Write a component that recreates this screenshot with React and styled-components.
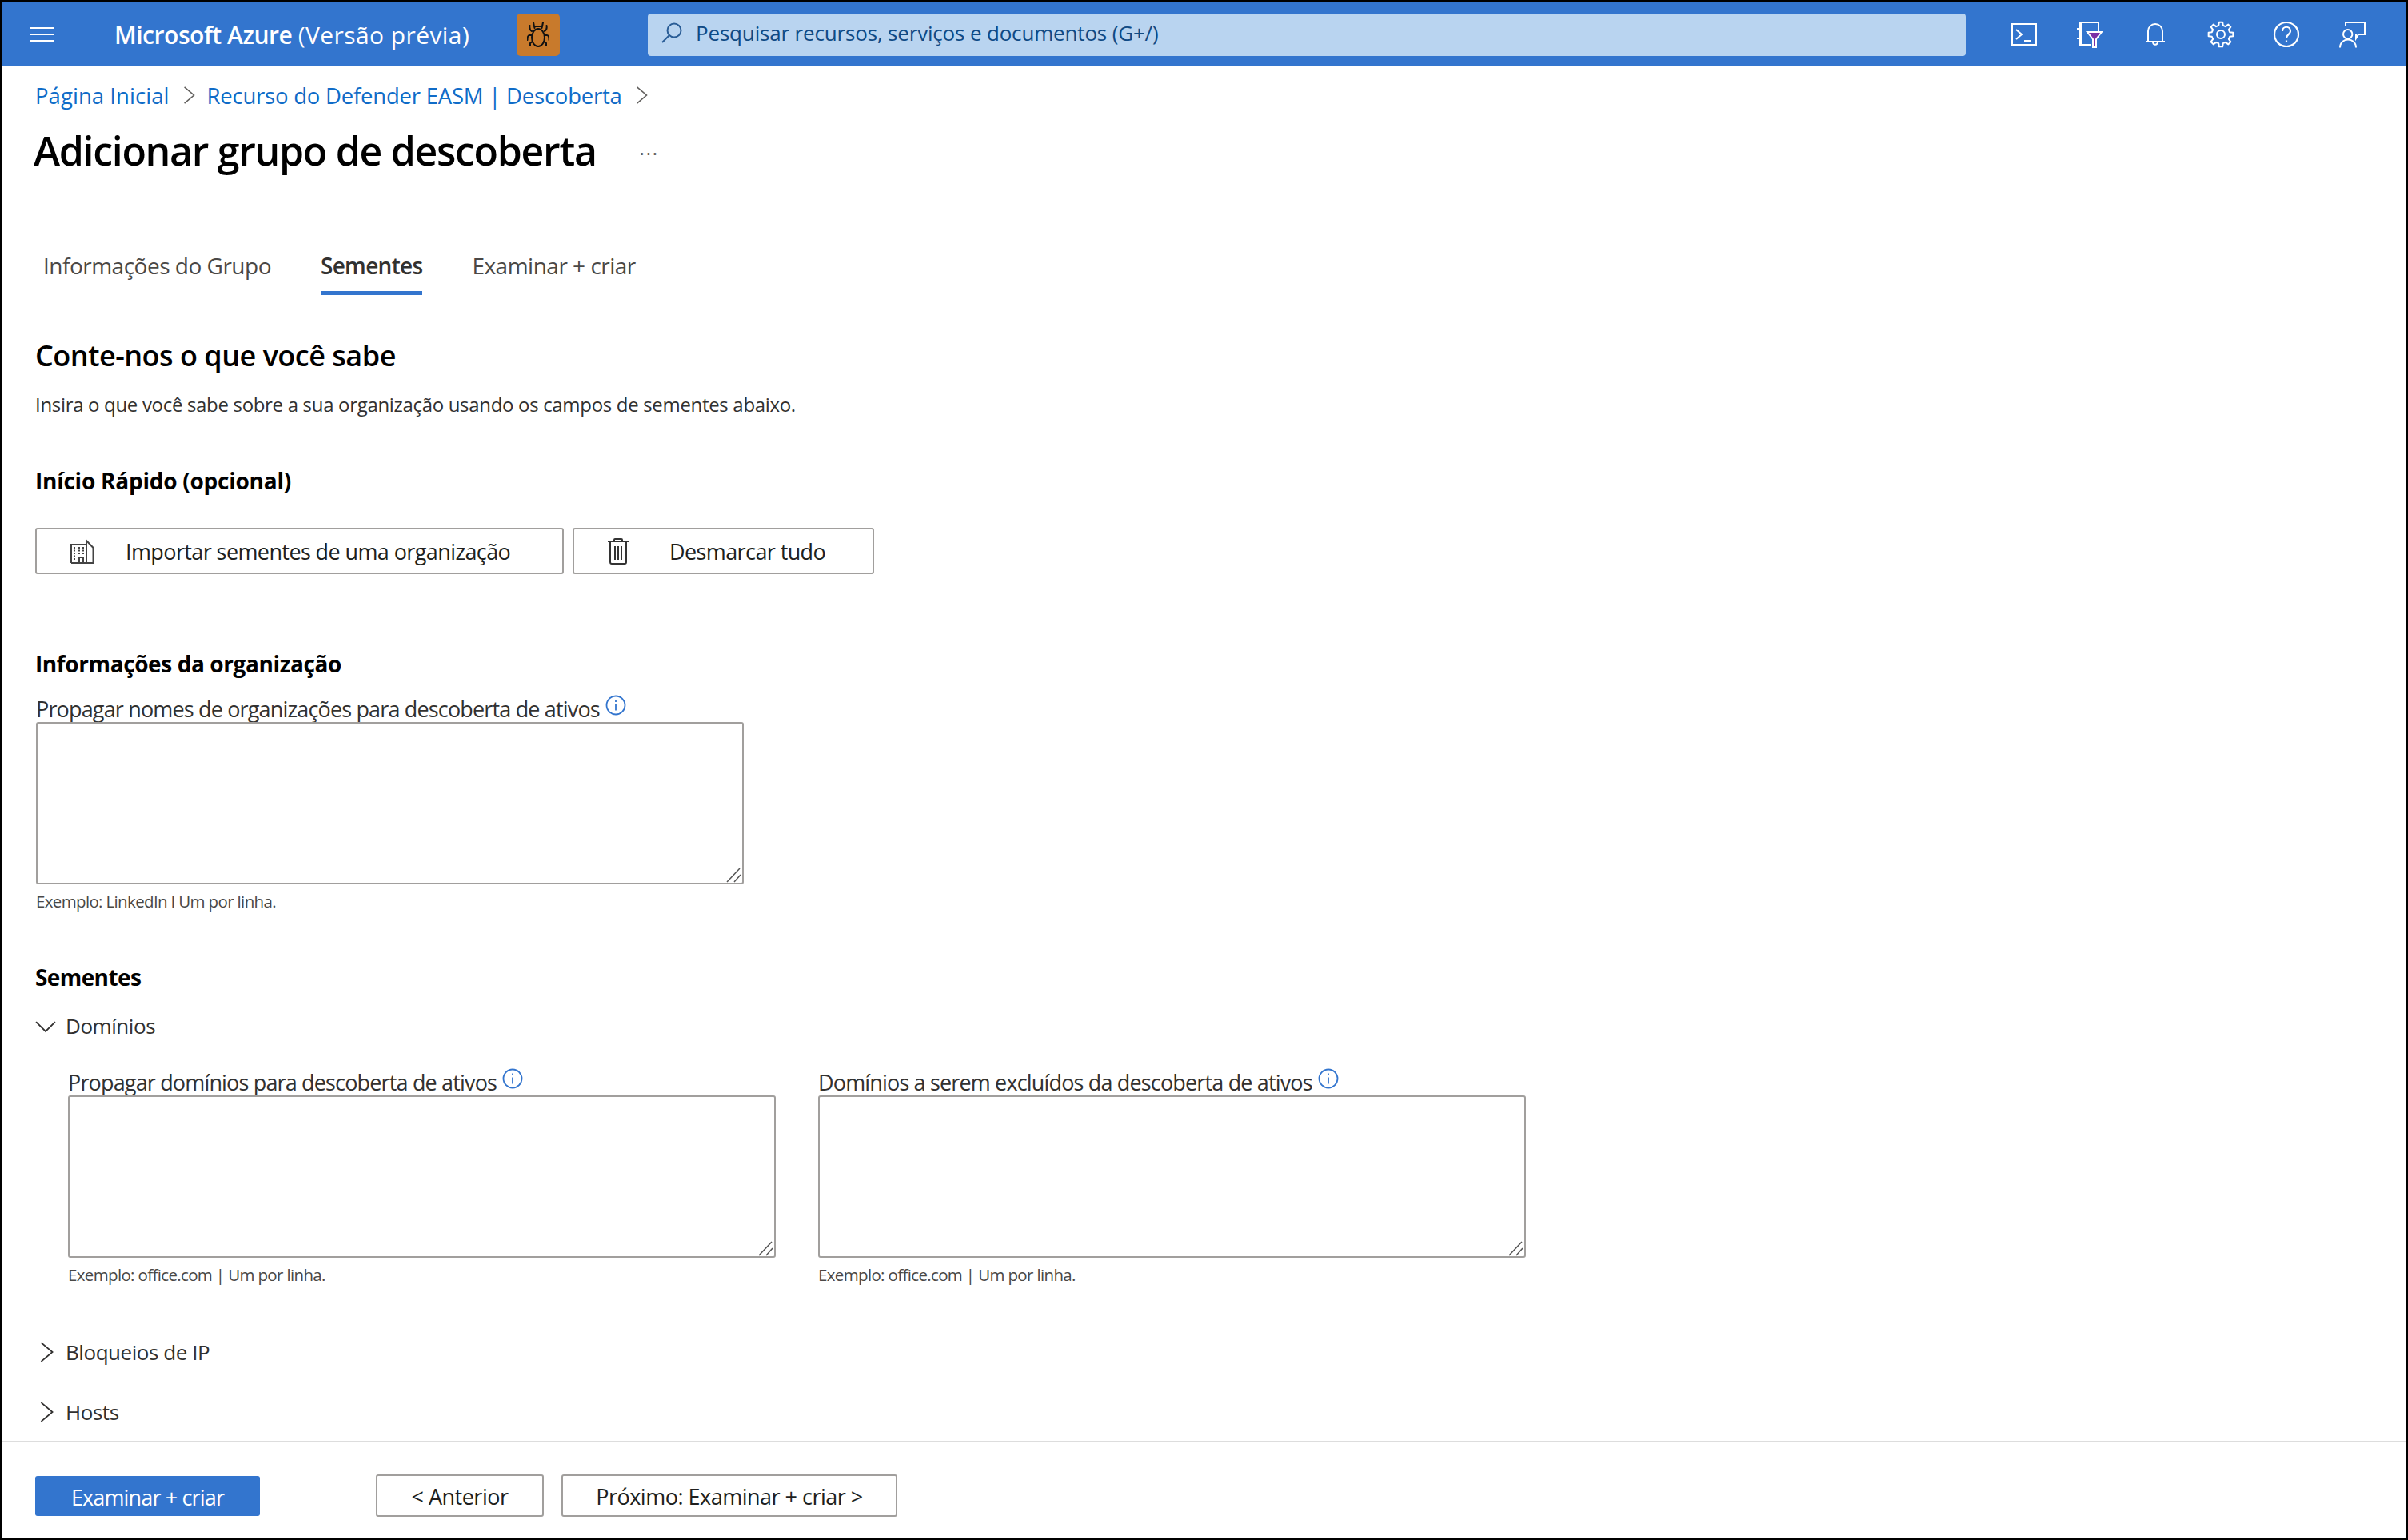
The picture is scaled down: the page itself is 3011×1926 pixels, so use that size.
import styled, { createGlobalStyle } from "styled-components";

const GlobalStyle = createGlobalStyle`
  html, body {
    margin: 0;
    background: #fff;
  }
  * {
    box-sizing: border-box;
  }
`;

const Frame = styled.div`
  border: 3px solid #000;
  color: #323130;
  display: flex;
  flex-direction: column;
  font-family: "Open Sans", "Liberation Sans", sans-serif;
  height: 1926px;
  width: 3011px;
`;

const TopBar = styled.header`
  align-items: center;
  background: #3375ce;
  color: #fff;
  display: flex;
  flex: none;
  height: 80px;
`;
const MenuButton = styled.div`
  display: flex;
  flex: none;
  margin-left: 35px;
  width: 105px;
`;
const Brand = styled.div`
  flex: none;
  font-size: 30px;
  font-weight: 600;
  letter-spacing: -0.45px;
  width: 503px;
`;
const BrandNote = styled.span`
  font-weight: 500;
  letter-spacing: 0.42px;
`;
const BugChip = styled.div`
  align-items: center;
  background: #c87a2c;
  border-radius: 5px;
  display: flex;
  flex: none;
  height: 53px;
  justify-content: center;
  width: 54px;
`;
const SearchBox = styled.div`
  align-items: center;
  background: #b9d4f0;
  border-radius: 4px;
  color: #0f4a85;
  display: flex;
  flex: none;
  font-size: 26px;
  gap: 16px;
  height: 53px;
  letter-spacing: -0.17px;
  margin-left: 110px;
  padding-left: 16px;
  padding-bottom: 5px;
  width: 1648px;
`;
const IconTray = styled.div`
  align-items: center;
  display: flex;
  flex: 1;
  justify-content: flex-start;
  padding-left: 55px;
`;
const TrayIcon = styled.div`
  align-items: center;
  display: flex;
  height: 40px;
  justify-content: center;
  margin-right: 46px;
  width: 36px;
`;

const Content = styled.main`
  display: flex;
  flex: 1;
  flex-direction: column;
  padding: 0 41px;
`;
const Breadcrumb = styled.nav`
  align-items: center;
  display: flex;
  font-size: 27.5px;
  height: 40px;
  letter-spacing: -0.22px;
  margin-top: 16px;
`;
const Crumb = styled.a`
  color: #0f6cc8;
  letter-spacing: ${(p) => p.$track ?? -0.22}px;
  margin-left: ${(p) => p.$offset || 0}px;
  text-decoration: none;
`;
const CrumbArrow = styled.span`
  display: flex;
  margin-left: ${(p) => p.$offset}px;
`;
const PageTitleRow = styled.div`
  align-items: center;
  display: flex;
  height: 60px;
  margin-left: -2px;
  margin-top: 19px;
`;
const PageTitle = styled.h1`
  color: #000;
  font-size: 50px;
  font-weight: 600;
  letter-spacing: -1.3px;
  line-height: 60px;
  margin: 0;
`;
const MoreDots = styled.span`
  color: #605e5c;
  font-size: 24px;
  letter-spacing: 1.8px;
  margin-bottom: 8px;
  margin-left: 54px;
`;
const Tabs = styled.div`
  display: flex;
  margin-left: 10px;
  margin-top: 94px;
`;
const Tab = styled.div`
  border-bottom: 5px solid ${(p) => (p.$active ? "#3375ce" : "transparent")};
  color: ${(p) => (p.$active ? "#323130" : "#4a4846")};
  font-size: 28px;
  font-weight: ${(p) => (p.$active ? 600 : 400)};
  height: 57px;
  letter-spacing: ${(p) => (p.$active ? -0.7 : -0.5)}px;
  line-height: 40px;
  margin-right: 62px;
`;
const SectionTitle = styled.h2`
  color: #000;
  font-size: 36px;
  font-weight: 600;
  letter-spacing: -0.5px;
  line-height: 50px;
  margin: 51px 0 0;
`;
const Description = styled.p`
  font-size: 24px;
  letter-spacing: -0.32px;
  line-height: 36px;
  margin: 18px 0 0;
`;
const GroupTitle = styled.h3`
  color: #000;
  font-size: 28px;
  font-weight: 700;
  letter-spacing: ${(p) => p.$track ?? -0.4}px;
  line-height: 40px;
  margin: ${(p) => p.$top}px 0 0;
`;
const ButtonRow = styled.div`
  display: flex;
  gap: 11px;
  margin-top: 39px;
`;
const ActionButton = styled.button`
  align-items: center;
  background: #fff;
  border: 2px solid #a19f9d;
  border-radius: 3px;
  color: #201f1e;
  display: flex;
  font-family: inherit;
  font-size: 27px;
  gap: ${(p) => p.$gap}px;
  height: 58px;
  letter-spacing: -0.6px;
  padding: 0 0 0 ${(p) => p.$inset}px;
  width: ${(p) => p.$width}px;
`;
const Field = styled.div`
  display: flex;
  flex-direction: column;
  width: 885px;
`;
const OrgField = styled(Field)`
  margin-left: 1px;
  margin-top: 17px;
`;
const FieldLabel = styled.label`
  align-items: flex-start;
  color: #323130;
  display: flex;
  font-size: 27px;
  gap: 1px;
  height: 36px;
  letter-spacing: -0.84px;
  line-height: 36px;
  padding-top: 2px;
  white-space: nowrap;
`;
const AreaBox = styled.div`
  height: 203px;
  position: relative;
  width: 885px;
`;
const SeedArea = styled.textarea`
  background: #fff;
  border: 2px solid #a19f9d;
  border-radius: 3px;
  display: block;
  height: 100%;
  margin: 0;
  outline: none;
  resize: none;
  width: 100%;
`;
const Grip = styled.svg`
  bottom: 2px;
  pointer-events: none;
  position: absolute;
  right: 2px;
`;
const Hint = styled.div`
  color: #4a4846;
  font-size: 20.5px;
  letter-spacing: -0.65px;
  line-height: 30px;
  margin-top: 6px;
`;
const Expander = styled.div`
  align-items: center;
  color: #323130;
  display: flex;
  font-size: 26px;
  gap: 12px;
  height: 40px;
  letter-spacing: -0.45px;
  margin-top: ${(p) => p.$top}px;
`;
const ExpanderIcon = styled.span`
  display: flex;
  justify-content: center;
  margin-left: ${(p) => p.$shift || 0}px;
  margin-right: ${(p) => -(p.$shift || 0)}px;
  width: 26px;
`;
const SeedGrid = styled.div`
  display: flex;
  gap: 53px;
  margin-top: 31px;
  padding-left: 41px;
`;

const Footer = styled.footer`
  align-items: flex-start;
  border-top: 1px solid #ddd;
  display: flex;
  flex: none;
  height: 121px;
  padding: 41px 41px 0;
`;
const PrimaryButton = styled.button`
  background: #3375ce;
  border: none;
  border-radius: 3px;
  color: #fff;
  font-family: inherit;
  font-size: 27px;
  height: 50px;
  letter-spacing: -0.85px;
  margin-right: 145px;
  margin-top: 2px;
  padding-top: 3px;
  width: 281px;
`;
const StepButton = styled.button`
  background: #fff;
  border: 2px solid #a19f9d;
  border-radius: 3px;
  color: #201f1e;
  font-family: inherit;
  font-size: 27px;
  height: 53px;
  letter-spacing: -0.5px;
  margin-right: 22px;
  padding-top: 3px;
  width: ${(p) => p.$width}px;
`;
const InfoGlyph = styled.svg`
  flex: none;
  margin-left: 6px;
`;

// eight toothed outline, tooth pointing straight up
function gearPath(cx, cy, outer, inner) {
  const pts = [];
  for (let i = 0; i < 8; i++) {
    const a = (i * 45 - 90) * (Math.PI / 180);
    [[-14, inner], [-8, outer], [8, outer], [14, inner]].forEach(([off, r]) => {
      const t = a + off * (Math.PI / 180);
      pts.push(`${(cx + r * Math.cos(t)).toFixed(2)} ${(cy + r * Math.sin(t)).toFixed(2)}`);
    });
  }
  return `M${pts.join("L")}Z`;
}

function Chevron({ dir = "right", size = 22, color = "#605e5c" }) {
  const d = dir === "right" ? "M5 1l13 11L5 23" : "M1 7l11 11L23 7";
  return (
    <svg width={size} height={size} viewBox="0 0 24 24" fill="none" stroke={color} strokeWidth="1.7">
      <path d={d} />
    </svg>
  );
}

function InfoIcon() {
  return (
    <InfoGlyph width="26" height="26" viewBox="0 0 26 26" fill="none" stroke="#3375ce" strokeWidth="1.8">
      <circle cx="13" cy="13" r="11.5" />
      <path d="M13 11.5v8M13 6.5v2.4" />
    </InfoGlyph>
  );
}

function BugIcon() {
  return (
    <svg width="28" height="32" viewBox="0 0 28 32" fill="none" stroke="#111" strokeWidth="2" strokeLinecap="round">
      <ellipse cx="14" cy="20" rx="8" ry="11" />
      <path d="M9.5 8 9 6h10l-.5 2M9 6 8 1M19 6l1-5" />
      <path d="M6 12C4 11 3 8 3.5 5M22 12c2-1 3-4 2.5-7M6 17H3c-2 0-2.500 3-2.500 6M22 17h3c2 0 2.500 3 2.500 6M7 25l-3 2v3M21 25l3 2v3" />
    </svg>
  );
}

function MagnifierIcon() {
  return (
    <svg width="28" height="28" viewBox="0 0 28 28" fill="none" stroke="#2a5d96" strokeWidth="2">
      <circle cx="17" cy="11" r="8.5" />
      <path d="M11 17 2 26" />
    </svg>
  );
}

function TerminalIcon() {
  return (
    <svg width="32" height="28" viewBox="0 0 32 28" fill="none" stroke="#fff" strokeWidth="2">
      <rect x="1" y="1" width="30" height="26" />
      <path d="M6 8l7 6-7 6M16 22h8" />
    </svg>
  );
}

function FilterBookIcon() {
  return (
    <svg width="32" height="33" viewBox="0 0 32 33" fill="none" stroke="#fff" strokeWidth="2">
      <path d="M27 13V1H5v28h12M3 1h2M3 29h2M3 1v28M0 9h5M0 21h5" />
      <path d="M13 13h18l-7 9v10h-4V22z" fill="#7b2fa5" />
    </svg>
  );
}

function BellIcon() {
  return (
    <svg width="26" height="32" viewBox="0 0 26 32" fill="none" stroke="#fff" strokeWidth="2">
      <path d="M4 25V12a9 9 0 0 1 18 0v13M1 25h24M10 25c0 5 6 5 6 0" />
    </svg>
  );
}

function GearIcon() {
  return (
    <svg width="34" height="34" viewBox="0 0 34 34" fill="none" stroke="#fff" strokeWidth="2" strokeLinejoin="round">
      <path d={gearPath(17, 17, 15.5, 11.5)} />
      <circle cx="17" cy="17" r="5" />
    </svg>
  );
}

function HelpIcon() {
  return (
    <svg width="34" height="34" viewBox="0 0 34 34" fill="none" stroke="#fff" strokeWidth="2.2">
      <circle cx="17" cy="17" r="15" />
      <path d="M12 13c0-7 10-7 10 0 0 4-5 4-5 9M17 24.5v2.5" />
    </svg>
  );
}

function FeedbackIcon() {
  return (
    <svg width="33" height="33" viewBox="0 0 33 33" fill="none" stroke="#fff" strokeWidth="2">
      <path d="M8 6V1h24v15h-8l-3 5v-6" />
      <circle cx="10.7" cy="15.7" r="5.7" />
      <path d="M1 32.5C1 19 21 19 21 32.5" />
    </svg>
  );
}

function BuildingIcon() {
  return (
    <svg width="30" height="32" viewBox="0 0 30 32" fill="none" stroke="#444" strokeWidth="2">
      <path d="M1 31V8h19M20 31V3l8.5 9v19M1 31h28M11 31v-7h5v7" />
      <path d="M5 11v17M11 11v10M16 11v10" strokeDasharray="2 1.5" strokeWidth="2" />
    </svg>
  );
}

function TrashIcon() {
  return (
    <svg width="26" height="33" viewBox="0 0 26 33" fill="none" stroke="#333" strokeWidth="2">
      <path d="M0 4h26M8 4V2q0-1 1-1h8q1 0 1 1v2M3 4v26q0 2 2 2h16q2 0 2-2V4" />
      <path d="M9 10v17M13 10v17M17 10v17" />
    </svg>
  );
}

function HamburgerIcon() {
  return (
    <svg width="30" height="20" viewBox="0 0 30 20" stroke="#fff" strokeWidth="2.2">
      <path d="M0 2h30M0 10h30M0 18h30" />
    </svg>
  );
}

function TextBox() {
  return (
    <AreaBox>
      <SeedArea />
      <Grip width="20" height="19" viewBox="0 0 20 19" fill="none" stroke="#555" strokeWidth="1.5">
        <path d="M1 18 17 1M10 18l8-9" />
      </Grip>
    </AreaBox>
  );
}

function SeedField({ label, hint }) {
  return (
    <Field>
      <FieldLabel>
        {label} <InfoIcon />
      </FieldLabel>
      <TextBox />
      <Hint>{hint}</Hint>
    </Field>
  );
}

export default function App() {
  return (
    <Frame>
      <GlobalStyle />
      <TopBar>
        <MenuButton>
          <HamburgerIcon />
        </MenuButton>
        <Brand>
          Microsoft Azure <BrandNote>(Versão prévia)</BrandNote>
        </Brand>
        <BugChip>
          <BugIcon />
        </BugChip>
        <SearchBox>
          <MagnifierIcon />
          Pesquisar recursos, serviços e documentos (G+/)
        </SearchBox>
        <IconTray>
          <TrayIcon><TerminalIcon /></TrayIcon>
          <TrayIcon><FilterBookIcon /></TrayIcon>
          <TrayIcon><BellIcon /></TrayIcon>
          <TrayIcon><GearIcon /></TrayIcon>
          <TrayIcon><HelpIcon /></TrayIcon>
          <TrayIcon><FeedbackIcon /></TrayIcon>
        </IconTray>
      </TopBar>

      <Content>
        <Breadcrumb>
          <Crumb $track={0.05}>Página Inicial</Crumb>
          <CrumbArrow $offset={14}><Chevron /></CrumbArrow>
          <Crumb $offset={11}>Recurso do Defender EASM | Descoberta</Crumb>
          <CrumbArrow $offset={14}><Chevron /></CrumbArrow>
        </Breadcrumb>
        <PageTitleRow>
          <PageTitle>Adicionar grupo de descoberta</PageTitle>
          <MoreDots>...</MoreDots>
        </PageTitleRow>
        <Tabs>
          <Tab>Informações do Grupo</Tab>
          <Tab $active>Sementes</Tab>
          <Tab>Examinar + criar</Tab>
        </Tabs>
        <SectionTitle>Conte-nos o que você sabe</SectionTitle>
        <Description>Insira o que você sabe sobre a sua organização usando os campos de sementes abaixo.</Description>
        <GroupTitle $top={57} $track={-0.25}>Início Rápido (opcional)</GroupTitle>
        <ButtonRow>
          <ActionButton $width={661} $gap={39} $inset={42}>
            <BuildingIcon />
            Importar sementes de uma organização
          </ActionButton>
          <ActionButton $width={377} $gap={51} $inset={42}>
            <TrashIcon />
            Desmarcar tudo
          </ActionButton>
        </ButtonRow>
        <GroupTitle $top={92}>Informações da organização</GroupTitle>
        <OrgField>
          <FieldLabel>
            Propagar nomes de organizações para descoberta de ativos <InfoIcon />
          </FieldLabel>
          <TextBox />
          <Hint>Exemplo: LinkedIn I Um por linha.</Hint>
        </OrgField>
        <GroupTitle $top={60} $track={-0.6}>Sementes</GroupTitle>
        <Expander $top={21}>
          <ExpanderIcon><Chevron dir="down" size={29} color="#323130" /></ExpanderIcon>
          Domínios
        </Expander>
        <SeedGrid>
          <SeedField label="Propagar domínios para descoberta de ativos" hint="Exemplo: office.com | Um por linha." />
          <SeedField label="Domínios a serem excluídos da descoberta de ativos" hint="Exemplo: office.com | Um por linha." />
        </SeedGrid>
        <Expander $top={62}>
          <ExpanderIcon $shift={2}><Chevron size={28} color="#323130" /></ExpanderIcon>
          Bloqueios de IP
        </Expander>
        <Expander $top={35}>
          <ExpanderIcon $shift={2}><Chevron size={28} color="#323130" /></ExpanderIcon>
          Hosts
        </Expander>
      </Content>

      <Footer>
        <PrimaryButton>Examinar + criar</PrimaryButton>
        <StepButton $width={210}>&lt; Anterior</StepButton>
        <StepButton $width={420}>Próximo: Examinar + criar &gt;</StepButton>
      </Footer>
    </Frame>
  );
}
